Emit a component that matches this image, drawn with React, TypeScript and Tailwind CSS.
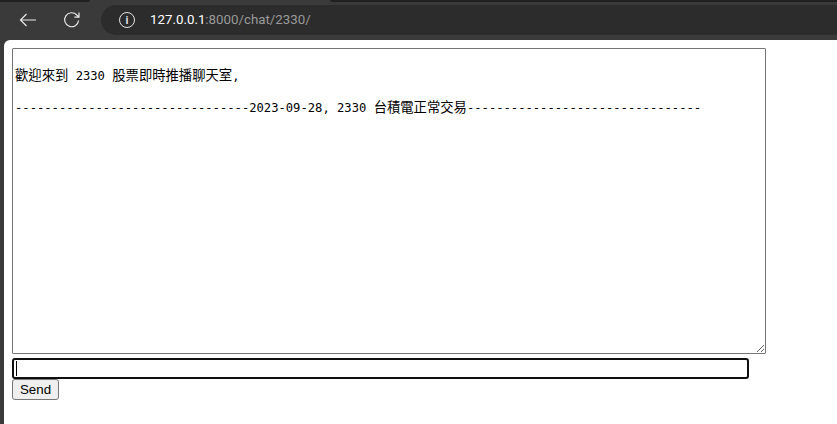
const MONO = "font-['DejaVu_Sans_Mono','Noto_Sans_CJK_TC',monospace]";

function Cjk({ children }: { children: string }) {
  return <span className="font-['Noto_Sans_CJK_TC',sans-serif] text-[13.33px]">{children}</span>;
}

function BackIcon() {
  return (
    <svg width="18" height="14" viewBox="0 0 18 14" fill="none" stroke="#e8e8e8" strokeWidth="1.2" className="shrink-0">
      <path d="M17 7H1.5M7.5 1 1.5 7l6 6" />
    </svg>
  );
}

function ReloadIcon() {
  return (
    <svg width="18" height="18" viewBox="0 0 18 18" fill="none" stroke="#e8e8e8" strokeWidth="1.2" className="shrink-0">
      <path d="M15.6 9.5A7 7 0 1 1 13.8 4L16 6.2M16 1.6v4.6h-4.6" />
    </svg>
  );
}

function Toolbar() {
  return (
    <div className="h-[40px] shrink-0 bg-[#3a3a3a]">
      <div className="flex h-[2px]">
        <div className="w-[90px] rounded-br-[2px] bg-[#202020]" />
        <div className="w-[240px]" />
        <div className="flex-1 rounded-bl-[2px] bg-[#202020]" />
      </div>
      <div className="mt-[3px] flex h-[30px] items-center pl-[19px]">
        <BackIcon />
        <div className="ml-[26px]">
          <ReloadIcon />
        </div>
        <div className="ml-[20px] flex h-[30px] flex-1 items-center rounded-l-full bg-[#2c2c2c] pl-[18px]">
          <span className="flex h-[16px] w-[16px] items-center justify-center rounded-full border border-[#e3e3e3] text-[10px] font-bold leading-none text-[#e3e3e3]">
            i
          </span>
          <span className="ml-[15px] font-['Roboto',sans-serif] text-[13.3px] text-[#9a9a9a]">
            <span className="text-white">127.0.0.1</span>:8000/chat/2330/
          </span>
        </div>
      </div>
    </div>
  );
}

export default function App() {
  return (
    <div className="flex h-[424px] w-[837px] flex-col overflow-hidden bg-[#3a3a3a]">
      <Toolbar />
      <div className="ml-[4px] flex-1 rounded-tl-[6px] bg-white pl-[8px] pt-[8px]">
        <div
          className={`h-[306px] w-[754px] resize overflow-auto rounded-[1px] border border-[#767676] pl-[2px] pt-[3px] text-[12.17px] leading-[15px] text-black ${MONO}`}
        >
          <div className="h-[15px]" />
          <div className="whitespace-pre">
            <Cjk>歡迎來到</Cjk> 2330 <Cjk>股票即時推播聊天室</Cjk>,
          </div>
          <div className="h-[15px]" />
          <div className="whitespace-pre">
            {"--------------------------------2023-09-28, 2330 "}
            <Cjk>台積電正常交易</Cjk>
            {"--------------------------------"}
          </div>
        </div>
        <div className="mt-[4px] h-[21px] w-[737px] rounded-[3px] border-2 border-[#101010] bg-white pl-[2px] pt-[1px]">
          <div className="h-[15px] w-px bg-black" />
        </div>
        <button className="block h-[21px] w-[47px] rounded-[3px] border border-[#767676] bg-[#efefef] font-['Liberation_Sans',sans-serif] text-[13.33px] leading-none text-black">
          Send
        </button>
      </div>
    </div>
  );
}
